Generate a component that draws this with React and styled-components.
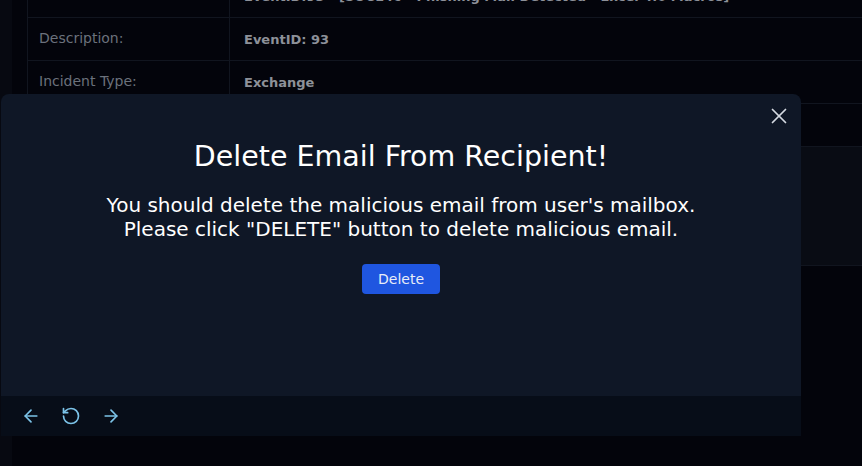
import React from 'react';
import styled, { createGlobalStyle } from 'styled-components';
import { ArrowLeft, ArrowRight, RotateCcw, X } from 'lucide-react';

const GlobalStyle = createGlobalStyle`
  html, body {
    margin: 0;
    padding: 0;
    background: #03040b;
  }
  body {
    font-family: "DejaVu Sans", "Noto Sans", sans-serif;
    color: #e5e7eb;
  }
`;

const Page = styled.div`
  position: relative;
  display: flex;
  width: 862px;
  height: 466px;
  overflow: hidden;
  background: #03040b;
`;

const Sidebar = styled.div`
  flex: 0 0 12px;
  background: #070911;
`;

const Content = styled.div`
  flex: 1;
  padding-left: 15px;
`;

const Table = styled.div`
  margin-top: -25px;
  border-left: 1px solid #11151f;
`;

const Row = styled.div`
  display: grid;
  grid-template-columns: 202px 1fr;
  height: ${(p) => p.$height || 43}px;
  border-bottom: 1px solid #11151f;
  box-sizing: border-box;
  background: ${(p) => p.$fill || 'transparent'};
`;

const Label = styled.div`
  padding: 12px 0 0 11px;
  border-right: 1px solid #11151f;
  font-size: 14px;
  color: #6b717c;
  white-space: nowrap;
`;

const Value = styled.div`
  padding: 14px 0 0 14px;
  font-size: 13px;
  font-weight: 700;
  color: #8d9199;
  white-space: nowrap;
`;

const Modal = styled.div`
  position: absolute;
  left: 1px;
  top: 94px;
  width: 800px;
  height: 342px;
  display: flex;
  flex-direction: column;
  background: #0f1726;
  border-radius: 8px 8px 0 0;
  overflow: hidden;
`;

const CloseButton = styled.button`
  position: absolute;
  top: 9px;
  right: 9px;
  display: flex;
  padding: 0;
  border: none;
  background: none;
  color: #d5dae1;
  cursor: pointer;
`;

const Body = styled.div`
  flex: 1;
  display: flex;
  flex-direction: column;
  align-items: center;
  padding-top: 46px;
`;

const Title = styled.h2`
  margin: 0 0 20px;
  font-size: 28.5px;
  line-height: 33px;
  font-weight: 400;
  color: #ffffff;
`;

const Text = styled.p`
  margin: 0 0 23px;
  font-size: 20px;
  line-height: 24px;
  text-align: center;
  color: #ffffff;
`;

const DeleteButton = styled.button`
  width: 78px;
  height: 30px;
  border: none;
  border-radius: 4px;
  background: #1f56e0;
  color: #e8edf8;
  font-family: inherit;
  font-size: 14px;
  cursor: pointer;
`;

const Footer = styled.div`
  flex: 0 0 40px;
  display: flex;
  align-items: center;
  gap: 20px;
  padding-left: 20px;
  background: #070d18;
  color: #7cc3e8;
`;

const IconButton = styled.span`
  display: flex;
`;

export default function App() {
  return (
    <>
      <GlobalStyle />
      <Page>
        <Sidebar />
        <Content>
          <Table>
            <Row>
              <Label>Event Name:</Label>
              <Value>
                EventID:93 - [SOC146 - Phishing Mail Detected - Excel 4.0 Macros]
              </Value>
            </Row>
            <Row>
              <Label>Description:</Label>
              <Value>EventID: 93</Value>
            </Row>
            <Row>
              <Label>Incident Type:</Label>
              <Value>Exchange</Value>
            </Row>
            <Row>
              <Label>Created Date:</Label>
              <Value />
            </Row>
            <Row $height={119} $fill="#090c14">
              <Label />
              <Value />
            </Row>
          </Table>
        </Content>

        <Modal>
          <CloseButton>
            <X size={26} strokeWidth={1.6} />
          </CloseButton>
          <Body>
            <Title>Delete Email From Recipient!</Title>
            <Text>
              You should delete the malicious email from user's mailbox.
              <br />
              Please click "DELETE" button to delete malicious email.
            </Text>
            <DeleteButton>Delete</DeleteButton>
          </Body>
          <Footer>
            <IconButton>
              <ArrowLeft size={20} strokeWidth={2} />
            </IconButton>
            <IconButton>
              <RotateCcw size={20} strokeWidth={2} />
            </IconButton>
            <IconButton>
              <ArrowRight size={20} strokeWidth={2} />
            </IconButton>
          </Footer>
        </Modal>
      </Page>
    </>
  );
}
